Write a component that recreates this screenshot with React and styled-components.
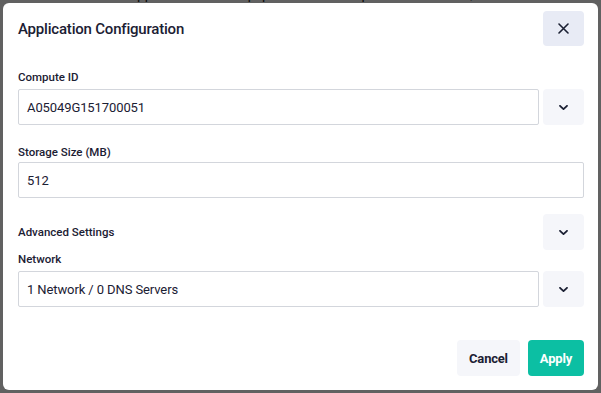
import React from 'react';
import styled, { createGlobalStyle } from 'styled-components';

const GlobalStyle = createGlobalStyle`
  html, body {
    margin: 0;
    padding: 0;
    height: 100%;
    overflow: hidden;
  }
  body {
    font-family: Roboto, "Liberation Sans", sans-serif;
    background: #ffffff;
  }
`;

const PageBehind = styled.div`
  padding: 0 10px 0 70px;
  margin-top: -15px;
  height: 18px;
  overflow: hidden;
  font-size: 14px;
  line-height: 18px;
  color: #222;
`;

const Overlay = styled.div`
  position: fixed;
  inset: 0;
  background: rgba(0, 0, 0, 0.62);
  display: flex;
  align-items: center;
  justify-content: center;
`;

const Modal = styled.div`
  width: 595px;
  height: 387px;
  box-sizing: border-box;
  background: #ffffff;
  border-radius: 6px;
  padding: 8px 14px 14px 15px;
  display: flex;
  flex-direction: column;
`;

const Header = styled.div`
  display: flex;
  align-items: center;
  justify-content: space-between;
`;

const Title = styled.h2`
  margin: 0;
  font-size: 15px;
  font-weight: 500;
  letter-spacing: -0.2px;
  color: #1b2033;
`;

const CloseButton = styled.button`
  width: 41px;
  height: 35px;
  border: none;
  border-radius: 4px;
  background: #e8ebf5;
  display: flex;
  align-items: center;
  justify-content: center;
  padding: 0;
  cursor: pointer;
`;

const Body = styled.div`
  margin-top: 23px;
  flex: 1;
`;

const Field = styled.div`
  margin-bottom: ${(p) => p.$gap || 19}px;
`;

const Label = styled.div`
  font-size: 11.5px;
  line-height: 16px;
  font-weight: 500;
  color: #1b2033;
  margin-bottom: ${(p) => p.$gap ?? 4}px;
`;

const Row = styled.div`
  display: flex;
  align-items: center;
  gap: 4px;
`;

const Input = styled.div`
  flex: 1;
  height: 36px;
  box-sizing: border-box;
  border: 1px solid #d3d6dc;
  border-radius: 2px;
  padding: 0 8px;
  display: flex;
  align-items: center;
  font-size: 13px;
  letter-spacing: -0.1px;
  color: #1b2033;
`;

const IconButton = styled.button`
  width: 41px;
  height: 36px;
  border: none;
  border-radius: 4px;
  background: #f5f6fa;
  display: flex;
  align-items: center;
  justify-content: center;
  padding: 0;
  flex-shrink: 0;
`;

const SectionRow = styled.div`
  display: flex;
  align-items: center;
  justify-content: space-between;
  margin-bottom: 1px;
`;

const SectionLabel = styled.span`
  font-size: 11.5px;
  font-weight: 500;
  color: #1b2033;
`;

const Footer = styled.div`
  display: flex;
  justify-content: flex-end;
  gap: 8px;
`;

const Button = styled.button`
  height: 36px;
  border: none;
  border-radius: 4px;
  padding: 0 12px;
  font-family: Roboto, "Liberation Sans", sans-serif;
  font-size: 13px;
  font-weight: 700;
  letter-spacing: -0.2px;
  background: ${(p) => (p.$primary ? '#0cbfa3' : '#f5f6fa')};
  color: ${(p) => (p.$primary ? '#ffffff' : '#1b2033')};
`;

const Chevron = () => (
  <svg width="9" height="5" viewBox="0 0 9 5" fill="none">
    <path d="M1 0.8l3.5 3.4 3.5-3.4" stroke="#1b2033" strokeWidth="1.8" strokeLinecap="round" strokeLinejoin="round" />
  </svg>
);

const CloseIcon = () => (
  <svg width="11" height="11" viewBox="0 0 11 11" fill="none">
    <path d="M1 1l9 9M10 1l-9 9" stroke="#1b2033" strokeWidth="1.6" strokeLinecap="round" />
  </svg>
);

const App = () => (
  <>
    <GlobalStyle />
    <PageBehind>
      business applications and equipment and Compute environment, check and review all settings
    </PageBehind>
    <Overlay>
      <Modal>
        <Header>
          <Title>Application Configuration</Title>
          <CloseButton aria-label="Close">
            <CloseIcon />
          </CloseButton>
        </Header>
        <Body>
          <Field>
            <Label>Compute ID</Label>
            <Row>
              <Input>A05049G151700051</Input>
              <IconButton>
                <Chevron />
              </IconButton>
            </Row>
          </Field>
          <Field $gap={16}>
            <Label $gap={2}>Storage Size (MB)</Label>
            <Row>
              <Input>512</Input>
            </Row>
          </Field>
          <SectionRow>
            <SectionLabel>Advanced Settings</SectionLabel>
            <IconButton>
              <Chevron />
            </IconButton>
          </SectionRow>
          <Field $gap={32}>
            <Label>Network</Label>
            <Row>
              <Input>1 Network / 0 DNS Servers</Input>
              <IconButton>
                <Chevron />
              </IconButton>
            </Row>
          </Field>
        </Body>
        <Footer>
          <Button>Cancel</Button>
          <Button $primary>Apply</Button>
        </Footer>
      </Modal>
    </Overlay>
  </>
);

export default App;
